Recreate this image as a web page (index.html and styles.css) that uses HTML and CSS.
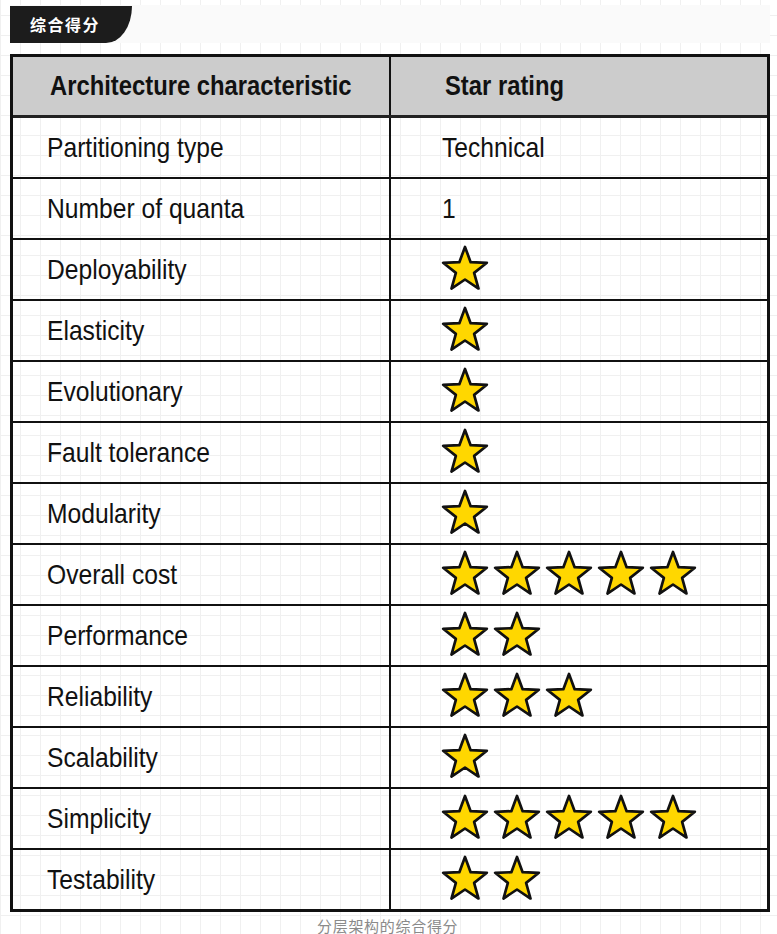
FILE: index.html
```html
<!DOCTYPE html>
<html lang="zh">
<head>
<meta charset="utf-8">
<title>综合得分</title>
<link rel="stylesheet" href="styles.css">
</head>
<body>
<div class="band"><div class="tag">综合得分</div></div>
<svg width="0" height="0" class="defs">
  <defs>
    <symbol id="star" viewBox="0 -1 50 48">
      <polygon points="25,1 30.88,16.91 47.83,17.58 34.51,28.09 39.11,44.42 25,35 10.89,44.42 15.49,28.09 2.17,17.58 19.12,16.91" fill="#ffd700" stroke="#111" stroke-width="2.8" stroke-linejoin="round"/>
    </symbol>
  </defs>
</svg>
<div class="table">
  <div class="row head"><div class="c1"><span>Architecture characteristic</span></div><div class="c2"><span>Star rating</span></div></div>
  <div class="row"><div class="c1"><span>Partitioning type</span></div><div class="c2"><span>Technical</span></div></div>
  <div class="row"><div class="c1"><span>Number of quanta</span></div><div class="c2"><span>1</span></div></div>
  <div class="row"><div class="c1"><span>Deployability</span></div><div class="c2 stars"><svg><use href="#star"/></svg></div></div>
  <div class="row"><div class="c1"><span>Elasticity</span></div><div class="c2 stars"><svg><use href="#star"/></svg></div></div>
  <div class="row"><div class="c1"><span>Evolutionary</span></div><div class="c2 stars"><svg><use href="#star"/></svg></div></div>
  <div class="row"><div class="c1"><span>Fault tolerance</span></div><div class="c2 stars"><svg><use href="#star"/></svg></div></div>
  <div class="row"><div class="c1"><span>Modularity</span></div><div class="c2 stars"><svg><use href="#star"/></svg></div></div>
  <div class="row"><div class="c1"><span>Overall cost</span></div><div class="c2 stars"><svg><use href="#star"/></svg><svg><use href="#star"/></svg><svg><use href="#star"/></svg><svg><use href="#star"/></svg><svg><use href="#star"/></svg></div></div>
  <div class="row"><div class="c1"><span>Performance</span></div><div class="c2 stars"><svg><use href="#star"/></svg><svg><use href="#star"/></svg></div></div>
  <div class="row"><div class="c1"><span>Reliability</span></div><div class="c2 stars"><svg><use href="#star"/></svg><svg><use href="#star"/></svg><svg><use href="#star"/></svg></div></div>
  <div class="row"><div class="c1"><span>Scalability</span></div><div class="c2 stars"><svg><use href="#star"/></svg></div></div>
  <div class="row"><div class="c1"><span>Simplicity</span></div><div class="c2 stars"><svg><use href="#star"/></svg><svg><use href="#star"/></svg><svg><use href="#star"/></svg><svg><use href="#star"/></svg><svg><use href="#star"/></svg></div></div>
  <div class="row"><div class="c1"><span>Testability</span></div><div class="c2 stars"><svg><use href="#star"/></svg><svg><use href="#star"/></svg></div></div>
</div>
<div class="caption">分层架构的综合得分</div>
</body>
</html>
```
FILE: styles.css
```css
html, body {
  margin: 0;
  padding: 0;
}
body {
  width: 777px;
  height: 934px;
  overflow: hidden;
  background-color: #fff;
  background-image:
    linear-gradient(to right, #f0f0f0 1px, transparent 1px),
    linear-gradient(to bottom, #f0f0f0 1px, transparent 1px);
  background-size: 20px 20px;
  background-position: 0 0, 0 15px;
  font-family: "Liberation Sans", Arial, sans-serif;
  color: #111;
}
.defs {
  position: absolute;
  width: 0;
  height: 0;
}
.band {
  margin: 5px 7px 0 10px;
  padding-top: 1px;
  height: 37px;
  background: #fafafa;
}
.tag {
  width: 122px;
  height: 37px;
  box-sizing: border-box;
  padding-left: 20px;
  background: #1c1c1c;
  color: #fff;
  border-bottom-right-radius: 26px 37px;
  font-family: "Noto Sans CJK SC", sans-serif;
  font-weight: 700;
  font-size: 16px;
  line-height: 37px;
  letter-spacing: 1.5px;
}
.table {
  margin: 11px 0 0 10px;
  width: 760px;
  box-sizing: border-box;
  border: 3px solid #111;
}
.row {
  display: grid;
  grid-template-columns: 378px 1fr;
  height: 61px;
  box-sizing: border-box;
  border-bottom: 2px solid #111;
  font-size: 28px;
}
.row:last-child {
  border-bottom: none;
  height: 59px;
}
.row.head {
  height: 61px;
  border-bottom: 3px solid #222;
  background: #cccccc;
  font-weight: 700;
}
.c1, .c2 {
  display: flex;
  align-items: center;
  white-space: nowrap;
}
.c1 span, .c2 span {
  display: inline-block;
  transform: scaleX(0.88);
  transform-origin: 0 50%;
}
.head .c1 span, .head .c2 span {
  transform: scaleX(0.85);
}
.c1 {
  padding-left: 34px;
  border-right: 2px solid #111;
}
.c2 {
  padding-left: 51px;
}
.head .c1 {
  padding-left: 37px;
}
.head .c2 {
  padding-left: 54px;
}
.stars {
  gap: 4px;
  padding-left: 50px;
  padding-bottom: 4px;
}
.stars svg {
  width: 48px;
  height: 46px;
}
.caption {
  margin-top: 7px;
  padding-left: 317px;
  font-family: "Noto Sans CJK SC", sans-serif;
  font-size: 15px;
  line-height: 14px;
  color: #8a8a8a;
  letter-spacing: 0.7px;
}
```
